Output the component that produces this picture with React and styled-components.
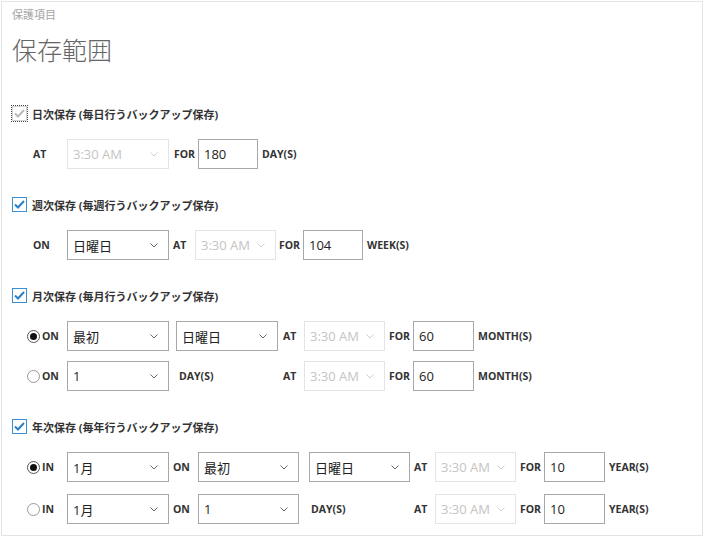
import React from 'react';
import styled, { createGlobalStyle } from 'styled-components';

const GlobalStyle = createGlobalStyle`
  body {
    margin: 0;
    background: #fff;
    font-family: "Open Sans", "Noto Sans CJK JP", sans-serif;
    color: #333;
  }
`;

const Panel = styled.div`
  box-sizing: border-box;
  margin: 1px 0 0 1px;
  width: 702px;
  height: 535px;
  border: 1px solid #e3e3e3;
  padding: 5px 10px 0;
`;

const Subtitle = styled.div`
  font-family: "Noto Sans CJK JP", sans-serif;
  font-size: 11px;
  line-height: 14px;
  color: #a3a3a3;
`;

const Title = styled.h1`
  margin: 13px 0 0;
  font-family: "Noto Sans CJK JP", sans-serif;
  font-size: 25px;
  line-height: 30px;
  font-weight: 300;
  color: #666;
`;

const Section = styled.section`
  margin-top: ${p => (p.$first ? 41 : 27)}px;
`;

const Header = styled.div`
  display: flex;
  align-items: center;
  gap: 5px;
  height: 17px;
`;

const Checkbox = styled.span`
  box-sizing: border-box;
  width: 15px;
  height: 15px;
  display: flex;
  align-items: center;
  justify-content: center;
  border: 1px solid ${p => (p.$muted ? '#cfd6dc' : '#3b8fd4')};
  outline: ${p => (p.$muted ? '1px dotted #444' : 'none')};
  background: #fff;
  color: ${p => (p.$muted ? '#b9b9b9' : '#2a80c8')};
`;

const HeaderLabel = styled.span`
  font-size: 11px;
  font-weight: 700;
  color: #333;
  white-space: nowrap;
`;

const Rows = styled.div`
  display: flex;
  flex-direction: column;
  gap: ${p => p.$gap || 10}px;
  margin: 17px 0 0 15px;
`;

const Row = styled.div`
  display: flex;
  align-items: center;
  height: 30px;
`;

const Lead = styled.div`
  box-sizing: border-box;
  width: 40px;
  flex-shrink: 0;
  display: flex;
  align-items: center;
  gap: 2px;
  padding-left: ${p => p.$pad || 0}px;
  font-size: 10.5px;
  font-weight: 700;
`;

const Radio = styled.span`
  box-sizing: border-box;
  width: 13px;
  height: 13px;
  border-radius: 50%;
  border: 1px solid ${p => (p.$on ? '#555' : '#9a9a9a')};
  display: flex;
  align-items: center;
  justify-content: center;

  &::after {
    content: '';
    width: 7px;
    height: 7px;
    border-radius: 50%;
    background: ${p => (p.$on ? '#111' : 'transparent')};
  }
`;

const Word = styled.span`
  box-sizing: border-box;
  flex-shrink: 0;
  width: ${p => p.$w}px;
  padding-left: ${p => p.$pl || 4}px;
  font-size: 10.5px;
  font-weight: 700;
  color: #333;
  white-space: nowrap;
`;

const SelectBox = styled.div`
  box-sizing: border-box;
  flex-shrink: 0;
  width: ${p => p.$w}px;
  height: 30px;
  margin-left: ${p => p.$ml || 0}px;
  display: flex;
  align-items: center;
  justify-content: space-between;
  padding: 0 10px 0 5px;
  border: 1px solid ${p => (p.$disabled ? '#e4e4e4' : '#a8a8a8')};
  background: #fff;
  font-size: 13px;
  color: ${p => (p.$disabled ? '#c4c4c4' : '#222')};
  white-space: nowrap;
`;

const Field = styled.input`
  box-sizing: border-box;
  flex-shrink: 0;
  width: ${p => p.$w || 61}px;
  height: 30px;
  margin: 0;
  padding: 0 5px;
  border: 1px solid #a8a8a8;
  border-radius: 0;
  font-family: "Open Sans", sans-serif;
  font-size: 13px;
  color: #222;
  outline: none;
`;

const Unit = styled.span`
  padding-left: 4px;
  font-size: 10.5px;
  font-weight: 700;
  color: #333;
`;

const Chevron = ({ disabled }) => (
  <svg width="8" height="5" viewBox="0 0 8 5">
    <polyline
      points="0.5,0.5 4,4 7.5,0.5"
      fill="none"
      stroke={disabled ? '#cfcfcf' : '#666'}
      strokeWidth="1"
    />
  </svg>
);

const Tick = () => (
  <svg width="11" height="9" viewBox="0 0 11 9">
    <polyline points="1,4.5 4,7.5 10,1" fill="none" stroke="currentColor" strokeWidth="2" />
  </svg>
);

const Select = ({ w = 102, ml, disabled, children }) => (
  <SelectBox $w={w} $ml={ml} $disabled={disabled}>
    <span>{children}</span>
    <Chevron disabled={disabled} />
  </SelectBox>
);

const Time = ({ w }) => <Select w={w} disabled>3:30 AM</Select>;

const SectionHeader = ({ muted, children }) => (
  <Header>
    <Checkbox $muted={muted}>
      <Tick />
    </Checkbox>
    <HeaderLabel>{children}</HeaderLabel>
  </Header>
);

const App = () => (
  <>
    <GlobalStyle />
    <Panel>
      <Subtitle>保護項目</Subtitle>
      <Title>保存範囲</Title>

      <Section $first>
        <SectionHeader muted>日次保存 (毎日行うバックアップ保存)</SectionHeader>
        <Rows>
          <Row>
            <Lead $pad={6}>AT</Lead>
            <Time w={102} />
            <Word $w={29} $pl={5}>FOR</Word>
            <Field $w={60} defaultValue="180" />
            <Unit>DAY(S)</Unit>
          </Row>
        </Rows>
      </Section>

      <Section>
        <SectionHeader>週次保存 (毎週行うバックアップ保存)</SectionHeader>
        <Rows>
          <Row>
            <Lead $pad={6}>ON</Lead>
            <Select>日曜日</Select>
            <Word $w={26} $pl={4}>AT</Word>
            <Time w={81} />
            <Word $w={27} $pl={3}>FOR</Word>
            <Field $w={60} defaultValue="104" />
            <Unit>WEEK(S)</Unit>
          </Row>
        </Rows>
      </Section>

      <Section>
        <SectionHeader>月次保存 (毎月行うバックアップ保存)</SectionHeader>
        <Rows $gap={10}>
          <Row>
            <Lead><Radio $on />ON</Lead>
            <Select>最初</Select>
            <Select ml={7}>日曜日</Select>
            <Word $w={26} $pl={5}>AT</Word>
            <Time w={81} />
            <Word $w={28} $pl={4}>FOR</Word>
            <Field defaultValue="60" />
            <Unit>MONTH(S)</Unit>
          </Row>
          <Row>
            <Lead><Radio />ON</Lead>
            <Select>1</Select>
            <Word $w={109} $pl={10}>DAY(S)</Word>
            <Word $w={26} $pl={5}>AT</Word>
            <Time w={81} />
            <Word $w={28} $pl={4}>FOR</Word>
            <Field defaultValue="60" />
            <Unit>MONTH(S)</Unit>
          </Row>
        </Rows>
      </Section>

      <Section>
        <SectionHeader>年次保存 (毎年行うバックアップ保存)</SectionHeader>
        <Rows $gap={12}>
          <Row>
            <Lead><Radio $on />IN</Lead>
            <Select>1月</Select>
            <Word $w={29} $pl={4}>ON</Word>
            <Select w={101}>最初</Select>
            <Select w={101} ml={10}>日曜日</Select>
            <Word $w={25} $pl={4}>AT</Word>
            <Time w={81} />
            <Word $w={28} $pl={4}>FOR</Word>
            <Field defaultValue="10" />
            <Unit>YEAR(S)</Unit>
          </Row>
          <Row>
            <Lead><Radio />IN</Lead>
            <Select>1月</Select>
            <Word $w={29} $pl={4}>ON</Word>
            <Select w={101}>1</Select>
            <Word $w={111} $pl={12}>DAY(S)</Word>
            <Word $w={25} $pl={4}>AT</Word>
            <Time w={81} />
            <Word $w={28} $pl={4}>FOR</Word>
            <Field defaultValue="10" />
            <Unit>YEAR(S)</Unit>
          </Row>
        </Rows>
      </Section>
    </Panel>
  </>
);

export default App;
